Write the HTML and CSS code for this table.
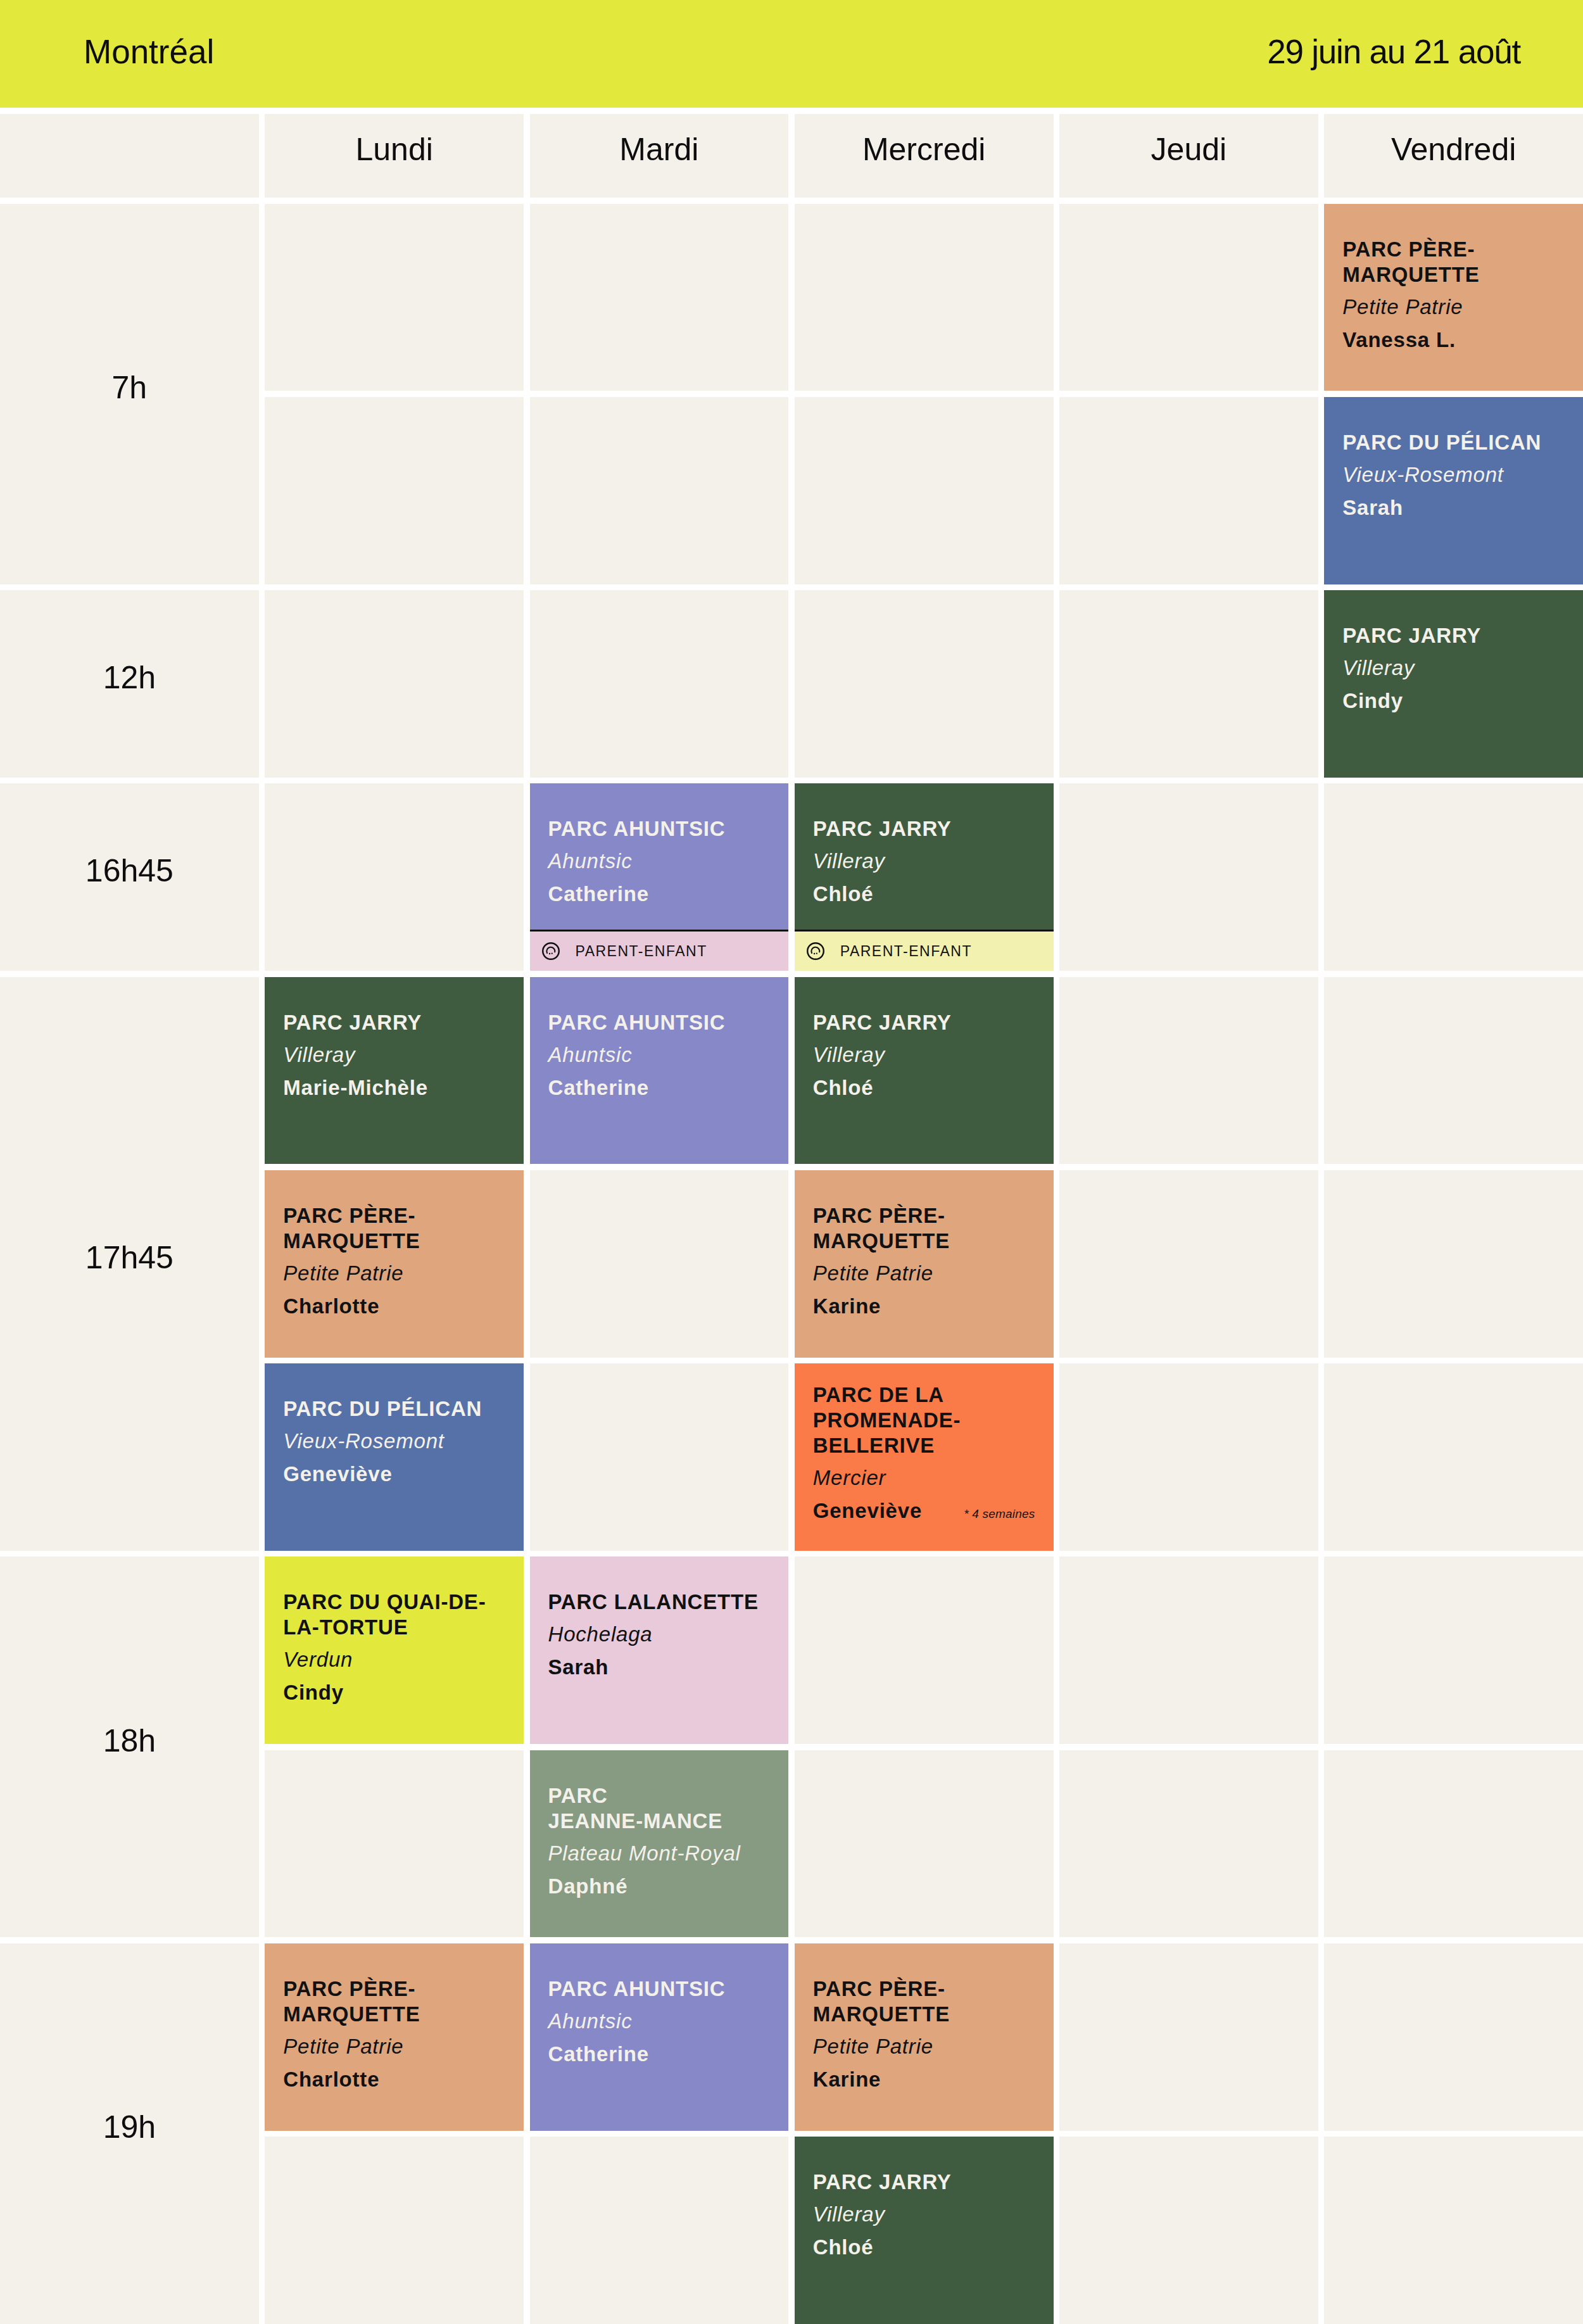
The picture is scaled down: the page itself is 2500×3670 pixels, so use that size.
FILE: index.html
```html
<!DOCTYPE html>
<html lang="fr">
<head>
<meta charset="utf-8">
<title>Montréal — horaire</title>
<link rel="stylesheet" href="styles.css">
</head>
<body>
<header class="topbar">
  <div class="topbar-city">Montréal</div>
  <div class="topbar-dates">29 juin au 21 août</div>
</header>

<main class="schedule">
  <div class="cell"></div>
  <div class="cell day">Lundi</div>
  <div class="cell day">Mardi</div>
  <div class="cell day">Mercredi</div>
  <div class="cell day">Jeudi</div>
  <div class="cell day">Vendredi</div>

  <!-- 7h -->
  <div class="cell time span-2">7h</div>
  <div class="cell"></div>
  <div class="cell"></div>
  <div class="cell"></div>
  <div class="cell"></div>
  <div class="cell card salmon">
    <div class="card-body">
      <div class="card-title">PARC PÈRE-<br>MARQUETTE</div>
      <div class="card-area">Petite Patrie</div>
      <div class="card-name">Vanessa L.</div>
    </div>
  </div>

  <div class="cell"></div>
  <div class="cell"></div>
  <div class="cell"></div>
  <div class="cell"></div>
  <div class="cell card blue">
    <div class="card-body">
      <div class="card-title">PARC DU PÉLICAN</div>
      <div class="card-area">Vieux-Rosemont</div>
      <div class="card-name">Sarah</div>
    </div>
  </div>

  <!-- 12h -->
  <div class="cell time">12h</div>
  <div class="cell"></div>
  <div class="cell"></div>
  <div class="cell"></div>
  <div class="cell"></div>
  <div class="cell card green">
    <div class="card-body">
      <div class="card-title">PARC JARRY</div>
      <div class="card-area">Villeray</div>
      <div class="card-name">Cindy</div>
    </div>
  </div>

  <!-- 16h45 -->
  <div class="cell time">16h45</div>
  <div class="cell"></div>
  <div class="cell card periwinkle">
    <div class="card-body">
      <div class="card-title">PARC AHUNTSIC</div>
      <div class="card-area">Ahuntsic</div>
      <div class="card-name">Catherine</div>
    </div>
    <div class="badge badge-pink">
      <svg class="badge-icon" viewBox="0 0 32 32" aria-hidden="true">
        <circle cx="16" cy="16" r="13.6" fill="none" stroke="currentColor" stroke-width="2.6"/>
        <path d="M9.6 19.2 A6.9 6.9 0 1 1 22.6 17.4" fill="none" stroke="currentColor" stroke-width="2.2" stroke-linecap="round"/>
        <circle cx="13.9" cy="20.3" r="1.25" fill="currentColor"/>
        <circle cx="17.9" cy="19.8" r="1.25" fill="currentColor"/>
      </svg>
      <span class="badge-text">PARENT-ENFANT</span>
    </div>
  </div>
  <div class="cell card green">
    <div class="card-body">
      <div class="card-title">PARC JARRY</div>
      <div class="card-area">Villeray</div>
      <div class="card-name">Chloé</div>
    </div>
    <div class="badge badge-yellow">
      <svg class="badge-icon" viewBox="0 0 32 32" aria-hidden="true">
        <circle cx="16" cy="16" r="13.6" fill="none" stroke="currentColor" stroke-width="2.6"/>
        <path d="M9.6 19.2 A6.9 6.9 0 1 1 22.6 17.4" fill="none" stroke="currentColor" stroke-width="2.2" stroke-linecap="round"/>
        <circle cx="13.9" cy="20.3" r="1.25" fill="currentColor"/>
        <circle cx="17.9" cy="19.8" r="1.25" fill="currentColor"/>
      </svg>
      <span class="badge-text">PARENT-ENFANT</span>
    </div>
  </div>
  <div class="cell"></div>
  <div class="cell"></div>

  <!-- 17h45 -->
  <div class="cell time span-3">17h45</div>
  <div class="cell card green">
    <div class="card-body">
      <div class="card-title">PARC JARRY</div>
      <div class="card-area">Villeray</div>
      <div class="card-name">Marie-Michèle</div>
    </div>
  </div>
  <div class="cell card periwinkle">
    <div class="card-body">
      <div class="card-title">PARC AHUNTSIC</div>
      <div class="card-area">Ahuntsic</div>
      <div class="card-name">Catherine</div>
    </div>
  </div>
  <div class="cell card green">
    <div class="card-body">
      <div class="card-title">PARC JARRY</div>
      <div class="card-area">Villeray</div>
      <div class="card-name">Chloé</div>
    </div>
  </div>
  <div class="cell"></div>
  <div class="cell"></div>

  <div class="cell card salmon">
    <div class="card-body">
      <div class="card-title">PARC PÈRE-<br>MARQUETTE</div>
      <div class="card-area">Petite Patrie</div>
      <div class="card-name">Charlotte</div>
    </div>
  </div>
  <div class="cell"></div>
  <div class="cell card salmon">
    <div class="card-body">
      <div class="card-title">PARC PÈRE-<br>MARQUETTE</div>
      <div class="card-area">Petite Patrie</div>
      <div class="card-name">Karine</div>
    </div>
  </div>
  <div class="cell"></div>
  <div class="cell"></div>

  <div class="cell card blue">
    <div class="card-body">
      <div class="card-title">PARC DU PÉLICAN</div>
      <div class="card-area">Vieux-Rosemont</div>
      <div class="card-name">Geneviève</div>
    </div>
  </div>
  <div class="cell"></div>
  <div class="cell card orange">
    <div class="card-body card-body-compact">
      <div class="card-title">PARC DE LA<br>PROMENADE-<br>BELLERIVE</div>
      <div class="card-area">Mercier</div>
      <div class="card-name card-name-row">
        <span>Geneviève</span>
        <span class="card-note">* 4 semaines</span>
      </div>
    </div>
  </div>
  <div class="cell"></div>
  <div class="cell"></div>

  <!-- 18h -->
  <div class="cell time span-2">18h</div>
  <div class="cell card lime">
    <div class="card-body">
      <div class="card-title">PARC DU QUAI-DE-<br>LA-TORTUE</div>
      <div class="card-area">Verdun</div>
      <div class="card-name">Cindy</div>
    </div>
  </div>
  <div class="cell card pink">
    <div class="card-body">
      <div class="card-title">PARC LALANCETTE</div>
      <div class="card-area">Hochelaga</div>
      <div class="card-name">Sarah</div>
    </div>
  </div>
  <div class="cell"></div>
  <div class="cell"></div>
  <div class="cell"></div>

  <div class="cell"></div>
  <div class="cell card sage">
    <div class="card-body">
      <div class="card-title">PARC<br>JEANNE-MANCE</div>
      <div class="card-area">Plateau Mont-Royal</div>
      <div class="card-name">Daphné</div>
    </div>
  </div>
  <div class="cell"></div>
  <div class="cell"></div>
  <div class="cell"></div>

  <!-- 19h -->
  <div class="cell time span-2">19h</div>
  <div class="cell card salmon">
    <div class="card-body">
      <div class="card-title">PARC PÈRE-<br>MARQUETTE</div>
      <div class="card-area">Petite Patrie</div>
      <div class="card-name">Charlotte</div>
    </div>
  </div>
  <div class="cell card periwinkle">
    <div class="card-body">
      <div class="card-title">PARC AHUNTSIC</div>
      <div class="card-area">Ahuntsic</div>
      <div class="card-name">Catherine</div>
    </div>
  </div>
  <div class="cell card salmon">
    <div class="card-body">
      <div class="card-title">PARC PÈRE-<br>MARQUETTE</div>
      <div class="card-area">Petite Patrie</div>
      <div class="card-name">Karine</div>
    </div>
  </div>
  <div class="cell"></div>
  <div class="cell"></div>

  <div class="cell"></div>
  <div class="cell"></div>
  <div class="cell card green">
    <div class="card-body">
      <div class="card-title">PARC JARRY</div>
      <div class="card-area">Villeray</div>
      <div class="card-name">Chloé</div>
    </div>
  </div>
  <div class="cell"></div>
  <div class="cell"></div>
</main>
</body>
</html>
```

FILE: styles.css
```css
html, body {
  margin: 0;
  padding: 0;
  background: #ffffff;
}

body {
  font-family: "Liberation Sans", Arial, sans-serif;
  color: #111111;
  width: 2500px;
  height: 3670px;
  overflow: hidden;
}

.topbar {
  height: 170px;
  box-sizing: border-box;
  background: #e3e83c;
  display: flex;
  align-items: center;
  justify-content: space-between;
  padding: 0 99px 8px 132px;
  margin-bottom: 10px;
  font-size: 53px;
  color: #0d0d0d;
}

.topbar-dates {
  letter-spacing: -1.2px;
}

.schedule {
  display: grid;
  grid-template-columns: repeat(6, 1fr);
  grid-template-rows: 132px repeat(11, 1fr);
  gap: 9.5px;
  height: 3490px;
}

.cell {
  background: #f3f1ea;
  min-width: 0;
  min-height: 0;
  overflow: hidden;
}

.day {
  display: flex;
  align-items: center;
  justify-content: center;
  padding-bottom: 20px;
  box-sizing: border-box;
  font-size: 50px;
  color: #0d0d0d;
}

.time {
  display: flex;
  align-items: center;
  justify-content: center;
  padding-bottom: 20px;
  box-sizing: border-box;
  font-size: 50px;
  color: #0d0d0d;
}

.span-2 { grid-row: span 2; }
.span-3 { grid-row: span 3; }

/* cards */
.card {
  display: flex;
  flex-direction: column;
  font-size: 33px;
  letter-spacing: 0.8px;
  color: #111111;
}

.card-body {
  flex: 1;
  padding: 52px 29px 0 29px;
}

.card-body-compact {
  padding-top: 30px;
}

.card-title {
  font-weight: 700;
  line-height: 40px;
  white-space: nowrap;
}

.card-area {
  font-style: italic;
  line-height: 40px;
  margin-top: 11px;
  white-space: nowrap;
}

.card-name {
  font-weight: 700;
  line-height: 40px;
  margin-top: 12px;
  white-space: nowrap;
}

.card-name-row {
  display: flex;
  justify-content: space-between;
  align-items: baseline;
}

.card-note {
  font-size: 19px;
  font-weight: 400;
  font-style: italic;
  letter-spacing: 0.2px;
}

.salmon { background: #dfa67e; }
.blue { background: #5670a8; color: #f3f1ea; }
.green { background: #3f5c40; color: #f3f1ea; }
.periwinkle { background: #8688c7; color: #f3f1ea; }
.sage { background: #879a82; color: #f3f1ea; }
.orange { background: #fa7b48; }
.lime { background: #e3e83c; }
.pink { background: #e8cadb; }

/* badge */
.badge {
  height: 62px;
  border-top: 3px solid #111111;
  display: flex;
  align-items: center;
  padding-left: 18px;
  color: #111111;
  letter-spacing: 1.5px;
}

.badge-pink { background: #e8cadb; }
.badge-yellow { background: #f2f1b0; }

.badge-icon {
  width: 30px;
  height: 30px;
  flex: none;
  margin-right: 24px;
}

.badge-text {
  font-size: 23px;
  line-height: 1;
}
```
